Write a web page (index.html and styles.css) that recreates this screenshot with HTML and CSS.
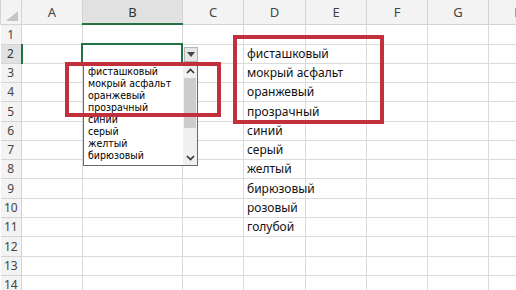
FILE: index.html
```html
<!DOCTYPE html>
<html lang="ru">
<head>
    <meta charset="UTF-8">
    <meta name="viewport" content="width=device-width, initial-scale=1.0">
    <title>Выпадающий список</title>
    <link rel="stylesheet" href="styles.css">
</head>
<body>

<div class="sheet-wrap">
    <table class="grid">
        <colgroup>
            <col class="w-num">
            <col class="w-col">
            <col class="w-wide">
            <col class="w-col">
            <col class="w-d">
            <col class="w-col">
            <col class="w-col">
            <col class="w-col">
            <col class="w-col">
        </colgroup>
        <thead>
            <tr class="head">
                <th class="corner">
                    <svg class="corner-tri" width="12" height="10" viewBox="0 0 12 10"><path d="M12 0 L12 10 L0 10 Z" fill="#c4c4c4"/></svg>
                </th>
                <th>A</th>
                <th class="sel">B</th>
                <th>C</th>
                <th>D</th>
                <th>E</th>
                <th>F</th>
                <th>G</th>
                <th>H</th>
            </tr>
        </thead>
        <tbody>
            <tr class="r20"><th class="num">1</th><td></td><td></td><td></td><td></td><td></td><td></td><td></td><td></td></tr>
            <tr><th class="num sel">2</th><td></td><td></td><td></td><td class="val">фисташковый</td><td></td><td></td><td></td><td></td></tr>
            <tr><th class="num">3</th><td></td><td></td><td></td><td class="val">мокрый асфальт</td><td></td><td></td><td></td><td></td></tr>
            <tr><th class="num">4</th><td></td><td></td><td></td><td class="val">оранжевый</td><td></td><td></td><td></td><td></td></tr>
            <tr class="r20"><th class="num">5</th><td></td><td></td><td></td><td class="val">прозрачный</td><td></td><td></td><td></td><td></td></tr>
            <tr><th class="num">6</th><td></td><td></td><td></td><td class="val">синий</td><td></td><td></td><td></td><td></td></tr>
            <tr><th class="num">7</th><td></td><td></td><td></td><td class="val">серый</td><td></td><td></td><td></td><td></td></tr>
            <tr><th class="num">8</th><td></td><td></td><td></td><td class="val">желтый</td><td></td><td></td><td></td><td></td></tr>
            <tr class="r20"><th class="num">9</th><td></td><td></td><td></td><td class="val">бирюзовый</td><td></td><td></td><td></td><td></td></tr>
            <tr><th class="num">10</th><td></td><td></td><td></td><td class="val">розовый</td><td></td><td></td><td></td><td></td></tr>
            <tr><th class="num">11</th><td></td><td></td><td></td><td class="val">голубой</td><td></td><td></td><td></td><td></td></tr>
            <tr class="r20"><th class="num">12</th><td></td><td></td><td></td><td></td><td></td><td></td><td></td><td></td></tr>
            <tr><th class="num">13</th><td></td><td></td><td></td><td></td><td></td><td></td><td></td><td></td></tr>
            <tr><th class="num">14</th><td></td><td></td><td></td><td></td><td></td><td></td><td></td><td></td></tr>
        </tbody>
    </table>

    <!-- active cell B2 with its dropdown -->
    <div class="active-cell"></div>
    <div class="dd-button">
        <svg width="8" height="5" viewBox="0 0 8 5"><path d="M0 0 L8 0 L4 5 Z" fill="#444"/></svg>
    </div>

    <div class="listbox">
        <div class="list-items">
            <div>фисташковый</div>
            <div>мокрый асфальт</div>
            <div>оранжевый</div>
            <div>прозрачный</div>
            <div>синий</div>
            <div>серый</div>
            <div>желтый</div>
            <div>бирюзовый</div>
        </div>
        <div class="scrollbar">
            <div class="arrow">
                <svg width="9" height="6" viewBox="0 0 9 6"><path d="M1 5 L4.5 1.5 L8 5" fill="none" stroke="#333" stroke-width="1.6"/></svg>
            </div>
            <div class="thumb"></div>
            <div class="track"></div>
            <div class="arrow">
                <svg width="9" height="6" viewBox="0 0 9 6"><path d="M1 1 L4.5 4.5 L8 1" fill="none" stroke="#333" stroke-width="1.6"/></svg>
            </div>
        </div>
    </div>

    <!-- highlight frames -->
    <div class="frame frame-list"></div>
    <div class="frame frame-source"></div>
</div>

</body>
</html>
```

FILE: styles.css
```css
body {
    margin: 0;
    background: #fff;
    font-family: "Noto Sans", "Open Sans", sans-serif;
    overflow: hidden;
}
.sheet-wrap {
    position: relative;
    width: 516px;
    height: 290px;
    overflow: hidden;
}
.grid {
    border-collapse: collapse;
    table-layout: fixed;
    width: 550px;
}
.w-num { width: 21px; }
.w-col { width: 61px; }
.w-wide { width: 100px; }
.w-d { width: 62px; }
.grid td,
.grid th {
    border: 1px solid #dadada;
    padding: 0;
    height: 19px;
    box-sizing: border-box;
}
.grid tr.r20 td,
.grid tr.r20 th {
    height: 20px;
}
.grid tr.head th {
    height: 24px;
    background: #f3f3f3;
    border-color: #d4d4d4;
    border-top: none;
    font-weight: normal;
    font-size: 13px;
    color: #444;
    text-align: center;
}
.grid th.corner {
    position: relative;
}
.corner-tri {
    position: absolute;
    right: 3px;
    bottom: 3px;
}
.grid th.num {
    background: #f3f3f3;
    border-color: #d4d4d4;
    border-left: none;
    font-weight: normal;
    font-size: 12px;
    color: #444;
    text-align: center;
}
.grid tr.head th.sel {
    background: #e1e1e1;
    border-bottom: 2px solid #217346;
    color: #333;
}
.grid th.num.sel {
    background: #e1e1e1;
    border-right: 2px solid #217346;
    color: #333;
}
.grid td.val {
    padding-left: 3px;
    font-size: 12px;
    color: #111;
    white-space: nowrap;
    overflow: visible;
}

.active-cell {
    position: absolute;
    left: 81px;
    top: 43px;
    width: 102px;
    height: 21px;
    border: 2px solid #217346;
    box-sizing: border-box;
}
.dd-button {
    position: absolute;
    left: 184px;
    top: 47px;
    width: 14px;
    height: 15px;
    box-sizing: border-box;
    background: #e6e6e6;
    border: 1px solid #b4b4b4;
    display: flex;
    align-items: center;
    justify-content: center;
}

.listbox {
    position: absolute;
    left: 83px;
    top: 63px;
    width: 115px;
    height: 103px;
    box-sizing: border-box;
    border: 1px solid #6a6a6a;
    background: #fff;
    display: flex;
}
.list-items {
    flex: 1;
    padding: 1px 0 0 4px;
    font-family: "DejaVu Sans Condensed", "DejaVu Sans", sans-serif;
    font-size: 10.5px;
    line-height: 12px;
    color: #000;
    white-space: nowrap;
    overflow: hidden;
}
.scrollbar {
    width: 14px;
    background: #f0f0f0;
    display: flex;
    flex-direction: column;
}
.scrollbar .arrow {
    height: 14px;
    display: flex;
    align-items: center;
    justify-content: center;
}
.scrollbar .thumb {
    height: 50px;
    margin: 0 1px;
    background: #cdcdcd;
}
.scrollbar .track {
    flex: 1;
}

.frame {
    position: absolute;
    border: 4px solid #c2303b;
    box-sizing: border-box;
}
.frame-list {
    left: 65px;
    top: 62px;
    width: 156px;
    height: 55px;
}
.frame-source {
    left: 233px;
    top: 35px;
    width: 151px;
    height: 89px;
}
```
